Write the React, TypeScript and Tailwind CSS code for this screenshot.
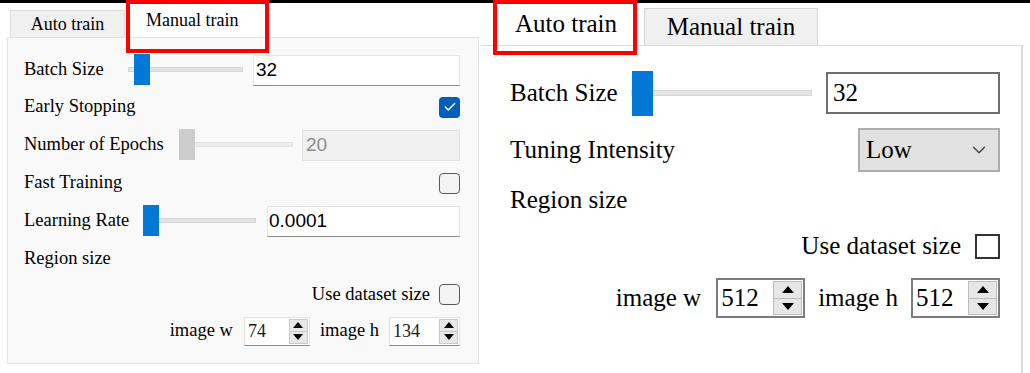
import React from 'react';
import { Check, ChevronDown } from 'lucide-react';

const SmallSlider = ({ w, thumbLeft, disabled }: { w: number; thumbLeft: number; disabled?: boolean }) => (
  <div className="relative h-[32px] shrink-0" style={{ width: w }}>
    <div
      className={`absolute left-0 right-0 top-[13px] h-[5px] border ${
        disabled ? 'bg-[#ececec] border-[#e2e2e2]' : 'bg-[#e3e3e3] border-[#d6d6d6]'
      }`}
    />
    <div
      className={`absolute top-0 w-[16px] h-[31px] ${disabled ? 'bg-[#cccccc]' : 'bg-[#0078d7]'}`}
      style={{ left: thumbLeft }}
    />
  </div>
);

const SmallCheck = ({ checked }: { checked?: boolean }) =>
  checked ? (
    <div className="w-[21px] h-[21px] rounded-[4px] bg-[#005fb8] flex items-center justify-center">
      <Check size={14} strokeWidth={2.5} className="text-white" />
    </div>
  ) : (
    <div className="w-[21px] h-[21px] rounded-[4px] border border-[#5a5a5a] bg-[#f3f3f3]" />
  );

const SmallSpin = ({ value, w }: { value: string; w: number }) => (
  <div
    className="h-[29px] bg-white border border-[#e2e2e2] border-b-[#8a8a8a] flex items-center"
    style={{ width: w }}
  >
    <span className="flex-1 pl-[3px] text-[18px] text-[#1a1a1a]">{value}</span>
    <div className="w-[19px] h-[25px] mr-[1px] flex flex-col border border-[#c9c9c9] bg-[#e8e8e8]">
      <div className="flex-1 flex items-center justify-center border-b border-[#c9c9c9]">
        <div className="w-0 h-0 border-l-[5px] border-r-[5px] border-b-[6px] border-l-transparent border-r-transparent border-b-black" />
      </div>
      <div className="flex-1 flex items-center justify-center">
        <div className="w-0 h-0 border-l-[5px] border-r-[5px] border-t-[6px] border-l-transparent border-r-transparent border-t-black" />
      </div>
    </div>
  </div>
);

const BigSpin = ({ value }: { value: string }) => (
  <div className="w-[89px] h-[40px] bg-white border-2 border-[#7c7c7c] flex items-center">
    <span className="flex-1 pl-[3px] text-[25px] text-black">{value}</span>
    <div className="w-[29px] h-[34px] mr-[1px] flex flex-col border border-[#bdbdbd] bg-[#e6e6e6]">
      <div className="flex-1 flex items-center justify-center border-b border-[#bdbdbd]">
        <div className="w-0 h-0 border-l-[6px] border-r-[6px] border-b-[7px] border-l-transparent border-r-transparent border-b-black" />
      </div>
      <div className="flex-1 flex items-center justify-center">
        <div className="w-0 h-0 border-l-[6px] border-r-[6px] border-t-[7px] border-l-transparent border-r-transparent border-t-black" />
      </div>
    </div>
  </div>
);

const ManualPanel = () => (
  <div className="relative w-[480px] shrink-0 font-['Liberation_Serif','Times_New_Roman',serif]">
    <div className="h-[34px] flex items-end pl-[10px]">
      <div className="w-[115px] h-[27px] bg-[#f0f0f0] border border-[#dedede] border-b-0 flex items-center justify-center text-[18px] text-black">
        Auto train
      </div>
      <div className="h-[34px] pl-[21px] pt-[4px] text-[18px] text-black">Manual train</div>
    </div>
    {/* annotation box */}
    <div className="absolute left-[126px] top-[-3px] w-[143px] h-[53px] border-[4px] border-[#ff0000]" />

    <div className="ml-[7px] w-[472px] h-[327px] border border-[#e3e3e3] bg-[#f9f9f9] pl-[16px] pr-[18px] pt-[14px] text-[18.5px] text-black">
      <div className="h-[36px] flex items-center">
        <span className="w-[104px] shrink-0">Batch Size</span>
        <SmallSlider w={115} thumbLeft={6} />
        <div className="ml-[10px] flex-1 h-[31px] bg-white border border-[#e4e4e4] border-b-[#8a8a8a] flex items-center pl-[2px] text-[19px] font-['Liberation_Sans',Arial,sans-serif]">
          32
        </div>
      </div>
      <div className="h-[38px] flex items-center justify-between">
        <span>Early Stopping</span>
        <SmallCheck checked />
      </div>
      <div className="h-[38px] flex items-center">
        <span className="w-[155px] shrink-0">Number of Epochs</span>
        <SmallSlider w={114} thumbLeft={0} disabled />
        <div className="ml-[9px] flex-1 h-[31px] bg-[#f0f0f0] border border-[#e2e2e2] flex items-center pl-[3px] text-[19px] text-[#8c8c8c] font-['Liberation_Sans',Arial,sans-serif]">
          20
        </div>
      </div>
      <div className="h-[38px] flex items-center justify-between">
        <span>Fast Training</span>
        <SmallCheck />
      </div>
      <div className="h-[38px] flex items-center">
        <span className="w-[119px] shrink-0">Learning Rate</span>
        <SmallSlider w={113} thumbLeft={0} />
        <div className="ml-[11px] flex-1 h-[31px] bg-white border border-[#e4e4e4] border-b-[#8a8a8a] flex items-center pl-[1px] text-[19px] font-['Liberation_Sans',Arial,sans-serif]">
          0.0001
        </div>
      </div>
      <div className="h-[38px] flex items-center">
        <span>Region size</span>
      </div>
      <div className="h-[33px] flex items-center justify-end">
        <span>Use dataset size</span>
        <div className="ml-[9px]">
          <SmallCheck />
        </div>
      </div>
      <div className="h-[40px] flex items-center justify-end">
        <span>image w</span>
        <div className="ml-[11px]">
          <SmallSpin value="74" w={66} />
        </div>
        <span className="ml-[10px]">image h</span>
        <div className="ml-[10px]">
          <SmallSpin value="134" w={71} />
        </div>
      </div>
    </div>
  </div>
);

const AutoPanel = () => (
  <div className="relative flex-1 pl-[1px] font-['Liberation_Serif','Times_New_Roman',serif]">
    <div className="h-[42px] flex items-end pl-[15px]">
      <div className="w-[140px] h-[42px] bg-white flex items-center justify-center text-[25px] text-black">
        Auto train
      </div>
      <div className="ml-[8px] w-[174px] h-[37px] bg-[#f0f0f0] border border-[#d6d6d6] border-b-0 flex items-center justify-center text-[25px] text-black">
        Manual train
      </div>
    </div>
    {/* annotation box */}
    <div className="absolute left-[13px] top-[-3px] w-[144px] h-[55px] border-[4px] border-[#ff0000]" />

    <div className="w-[542px] h-[330px] bg-white border-t border-r-2 border-[#dadada] pl-[29px] pr-[21px] pt-[24px] text-[25px] text-black">
      <div className="h-[46px] flex items-center">
        <span className="w-[121px] shrink-0">Batch Size</span>
        <div className="relative w-[181px] h-[45px] shrink-0">
          <div className="absolute left-0 right-0 top-[19px] h-[6px] bg-[#e5e5e5] border border-[#d8d8d8]" />
          <div className="absolute left-[1px] top-0 w-[21px] h-[45px] bg-[#0078d7]" />
        </div>
        <div className="ml-[14px] flex-1 h-[42px] bg-white border-2 border-[#6e6e6e] flex items-center pl-[5px]">
          32
        </div>
      </div>
      <div className="h-[68px] flex items-center justify-between">
        <span>Tuning Intensity</span>
        <div className="w-[142px] h-[44px] bg-[#e1e1e1] border-2 border-[#adadad] flex items-center pl-[6px] pr-[8px]">
          <span className="flex-1">Low</span>
          <ChevronDown size={22} strokeWidth={1.5} className="text-[#444]" />
        </div>
      </div>
      <div className="h-[32px] flex items-center">
        <span>Region size</span>
      </div>
      <div className="h-[60px] flex items-center justify-end">
        <span>Use dataset size</span>
        <div className="ml-[14px] w-[25px] h-[25px] border-2 border-[#333] bg-white" />
      </div>
      <div className="h-[44px] flex items-center justify-end">
        <span>image w</span>
        <div className="ml-[15px]">
          <BigSpin value="512" />
        </div>
        <span className="ml-[13px]">image h</span>
        <div className="ml-[13px]">
          <BigSpin value="512" />
        </div>
      </div>
    </div>
  </div>
);

export default function App() {
  return (
    <div className="w-[1030px] h-[373px] bg-white overflow-hidden">
      <div className="h-[3px] bg-black" />
      <div className="flex">
        <ManualPanel />
        <AutoPanel />
      </div>
    </div>
  );
}
